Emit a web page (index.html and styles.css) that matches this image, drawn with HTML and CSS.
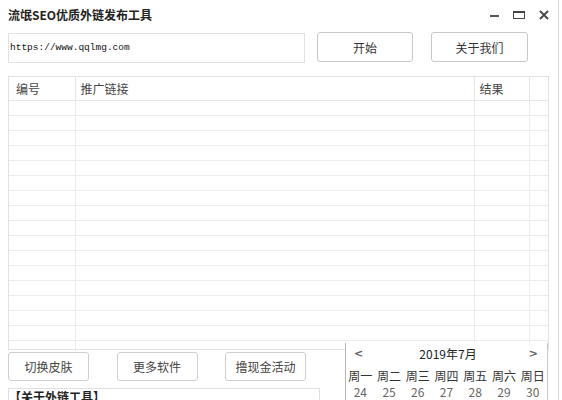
FILE: index.html
```html
<!DOCTYPE html>
<html lang="zh-CN">
<head>
<meta charset="utf-8">
<title>流氓SEO优质外链发布工具</title>
<link rel="stylesheet" href="styles.css">
</head>
<body>
<div class="window">
  <div class="titlebar">
    <div class="title">流氓SEO优质外链发布工具</div>
    <div class="controls">
      <span class="ctl-min"></span>
      <span class="ctl-max"></span>
      <svg class="ctl-close" width="10" height="10" viewBox="0 0 10 10"><path d="M1 1L9 9M9 1L1 9" stroke="#444" stroke-width="1.8" fill="none"/></svg>
    </div>
  </div>
  <div class="toolbar">
    <div class="url-input">https://www.qqlmg.com</div>
    <button class="btn btn-start">开始</button>
    <button class="btn btn-about">关于我们</button>
  </div>
  <div class="grid-wrap">
    <table class="grid">
      <colgroup>
        <col class="c-id"><col class="c-link"><col class="c-res"><col class="c-pad">
      </colgroup>
      <thead>
        <tr><th>编号</th><th>推广链接</th><th>结果</th><th></th></tr>
      </thead>
      <tbody>
        <tr><td></td><td></td><td></td><td></td></tr>
        <tr><td></td><td></td><td></td><td></td></tr>
        <tr><td></td><td></td><td></td><td></td></tr>
        <tr><td></td><td></td><td></td><td></td></tr>
        <tr><td></td><td></td><td></td><td></td></tr>
        <tr><td></td><td></td><td></td><td></td></tr>
        <tr><td></td><td></td><td></td><td></td></tr>
        <tr><td></td><td></td><td></td><td></td></tr>
        <tr><td></td><td></td><td></td><td></td></tr>
        <tr><td></td><td></td><td></td><td></td></tr>
        <tr><td></td><td></td><td></td><td></td></tr>
        <tr><td></td><td></td><td></td><td></td></tr>
        <tr><td></td><td></td><td></td><td></td></tr>
        <tr><td></td><td></td><td></td><td></td></tr>
        <tr><td></td><td></td><td></td><td></td></tr>
        <tr><td></td><td></td><td></td><td></td></tr>
        <tr><td></td><td></td><td></td><td></td></tr>
      </tbody>
    </table>
  </div>
  <div class="bottom">
    <div class="actions">
      <button class="btn btn-small">切换皮肤</button>
      <button class="btn btn-small">更多软件</button>
      <button class="btn btn-small">撸现金活动</button>
    </div>
    <div class="about-box">【关于外链工具】</div>
  </div>
  <div class="calendar">
    <div class="cal-head">
      <span class="cal-nav">&lt;</span>
      <span class="cal-title">2019年7月</span>
      <span class="cal-nav">&gt;</span>
    </div>
    <div class="cal-week">
      <span>周一</span><span>周二</span><span>周三</span><span>周四</span><span>周五</span><span>周六</span><span>周日</span>
    </div>
    <div class="cal-days">
      <span>24</span><span>25</span><span>26</span><span>27</span><span>28</span><span>29</span><span>30</span>
    </div>
  </div>
</div>
</body>
</html>
```
FILE: styles.css
```css
* { box-sizing: border-box; }
html, body { margin: 0; padding: 0; background: #fff; }
body {
  font-family: "Noto Sans CJK SC", "Noto Sans", sans-serif;
  color: #333;
  width: 562px;
  height: 400px;
  overflow: hidden;
}
.window {
  position: relative;
  width: 559px;
  height: 400px;
  border-right: 1px solid #d6d6d6;
  background: #fff;
}
.titlebar {
  height: 28px;
  display: flex;
  align-items: center;
  justify-content: space-between;
  padding: 0 9px 0 8px;
}
.title {
  font-size: 12px;
  font-weight: bold;
  color: #222;
  line-height: 14px;
  margin-top: 1px;
}
.controls {
  display: flex;
  align-items: center;
  gap: 14px;
  margin-top: 2px;
}
.ctl-min {
  width: 9px;
  height: 2px;
  background: #555;
  margin-top: 2px;
}
.ctl-max {
  width: 12px;
  height: 8px;
  border: 1.5px solid #444;
  border-top-width: 2.5px;
}
.ctl-close { display: block; }

.toolbar {
  display: flex;
  align-items: flex-start;
  padding: 4px 0 0 8px;
}
.url-input {
  width: 297px;
  height: 30px;
  margin-top: 1px;
  border: 1px solid #e2e2e2;
  font-family: "Liberation Mono", monospace;
  font-size: 9.5px;
  color: #111;
  line-height: 28px;
  padding-left: 1px;
}
.btn {
  font-family: "Noto Sans CJK SC", "Noto Sans", sans-serif;
  font-size: 12px;
  color: #333;
  background: #fff;
  border: 1px solid #c8c8c8;
  border-radius: 3px;
  padding: 0;
  height: 30px;
}
.btn-start { width: 96px; margin-left: 12px; }
.btn-about { width: 97px; margin-left: 18px; }

.grid-wrap {
  margin: 13px 0 0 8px;
  width: 541px;
  height: 274px;
  overflow: hidden;
  border: 1px solid #e2e2e2;
}
.grid {
  border-collapse: collapse;
  table-layout: fixed;
  width: 540px;
}
.c-id { width: 66px; }
.c-link { width: 399px; }
.c-res { width: 55px; }
.c-pad { width: 20px; }
.grid th {
  height: 23px;
  font-weight: normal;
  font-size: 12px;
  color: #444;
  text-align: left;
  padding: 0 0 0 7px;
  border-right: 1px solid #e6e6e6;
  border-bottom: 1px solid #e6e6e6;
}
.grid th:nth-child(2) { padding-left: 5px; }
.grid th:nth-child(3) { padding-left: 5px; }
.grid td {
  height: 15px;
  padding: 0;
  border-right: 1px solid #ececec;
  border-bottom: 1px solid #ececec;
}
.grid th:last-child, .grid td:last-child { border-right: none; }

.bottom {
  padding: 2px 0 0 8px;
}
.actions {
  width: 298px;
  display: flex;
  justify-content: space-between;
}
.btn-small {
  width: 81px;
  height: 29px;
  border-radius: 3px;
  border-color: #cfcfcf;
  font-size: 12px;
  color: #444;
}
.about-box {
  margin-top: 7px;
  width: 312px;
  height: 30px;
  border: 1px solid #e0e0e0;
  border-bottom: none;
  font-size: 12px;
  font-weight: bold;
  color: #222;
  line-height: 14px;
  padding-top: 1px;
}

.calendar {
  position: absolute;
  left: 345px;
  top: 343px;
  width: 203px;
  height: 60px;
  background: #fff;
  border-left: 1px solid #b8b8b8;
  border-right: 1px solid #c8c8c8;
}
.cal-head {
  height: 21px;
  display: flex;
  align-items: center;
  justify-content: space-between;
  padding: 0 9px 0 8px;
}
.cal-nav {
  font-family: "DejaVu Sans", sans-serif;
  font-size: 11px;
  color: #666;
  font-weight: bold;
}
.cal-title {
  font-size: 12px;
  color: #222;
  margin-left: 4px;
}
.cal-week, .cal-days {
  display: grid;
  grid-template-columns: repeat(7, 1fr);
  text-align: center;
}
.cal-week {
  margin-top: 3px;
  font-size: 12px;
  color: #333;
  line-height: 17px;
}
.cal-days {
  font-size: 12px;
  color: #666;
  line-height: 16px;
}
```
